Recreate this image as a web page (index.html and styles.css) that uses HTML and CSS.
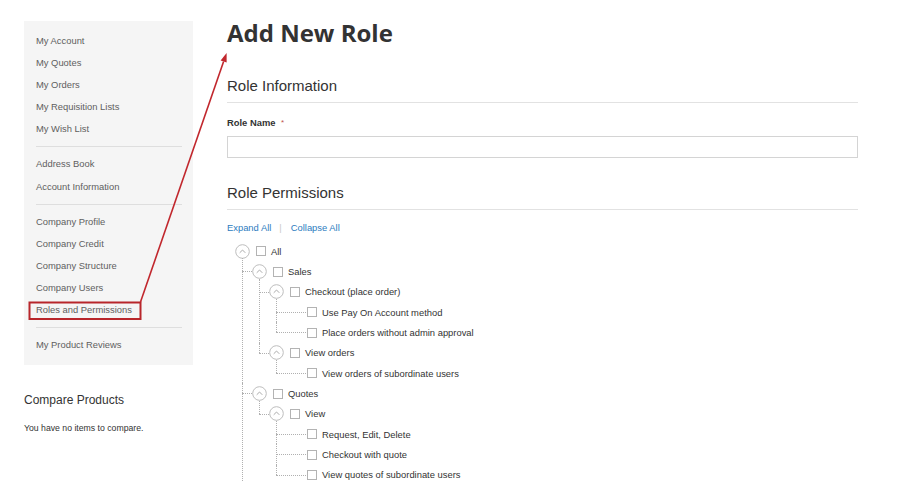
FILE: index.html
```html
<!DOCTYPE html>
<html>
<head>
<meta charset="utf-8">
<title>Add New Role</title>
<link rel="stylesheet" href="styles.css">
</head>
<body>
<div class="page">
  <aside class="sidebar">
    <nav class="account-nav">
      <ul class="nav-group">
        <li>My Account</li>
        <li>My Quotes</li>
        <li>My Orders</li>
        <li>My Requisition Lists</li>
        <li>My Wish List</li>
      </ul>
      <ul class="nav-group">
        <li>Address Book</li>
        <li>Account Information</li>
      </ul>
      <ul class="nav-group">
        <li>Company Profile</li>
        <li>Company Credit</li>
        <li>Company Structure</li>
        <li>Company Users</li>
        <li>Roles and Permissions</li>
      </ul>
      <ul class="nav-group">
        <li>My Product Reviews</li>
      </ul>
    </nav>
    <div class="compare">
      <div class="compare-title">Compare Products</div>
      <div class="compare-empty">You have no items to compare.</div>
    </div>
  </aside>

  <main class="main">
    <h1 class="page-title">Add New Role</h1>

    <h2 class="section-title first">Role Information</h2>
    <label class="field-label">Role Name <span class="req">*</span></label>
    <div class="input"></div>

    <h2 class="section-title">Role Permissions</h2>
    <div class="tree-links"><span class="link">Expand All</span><span class="sep">|</span><span class="link">Collapse All</span></div>

    <ul class="tree">
      <li>
        <div class="row"><span class="tog"><svg viewBox="0 0 15 15" width="15" height="15"><circle cx="7.5" cy="7.5" r="6.8" fill="#fff" stroke="#bdbdbd" stroke-width="1"/><path d="M4.7 8.8 L7.5 6 L10.3 8.8" fill="none" stroke="#ababab" stroke-width="1"/></svg></span><span class="cb"></span><span class="label">All</span></div>
        <ul>
          <li>
            <div class="row"><span class="tog"><svg viewBox="0 0 15 15" width="15" height="15"><circle cx="7.5" cy="7.5" r="6.8" fill="#fff" stroke="#bdbdbd" stroke-width="1"/><path d="M4.7 8.8 L7.5 6 L10.3 8.8" fill="none" stroke="#ababab" stroke-width="1"/></svg></span><span class="cb"></span><span class="label">Sales</span></div>
            <ul>
              <li>
                <div class="row"><span class="tog"><svg viewBox="0 0 15 15" width="15" height="15"><circle cx="7.5" cy="7.5" r="6.8" fill="#fff" stroke="#bdbdbd" stroke-width="1"/><path d="M4.7 8.8 L7.5 6 L10.3 8.8" fill="none" stroke="#ababab" stroke-width="1"/></svg></span><span class="cb"></span><span class="label">Checkout (place order)</span></div>
                <ul>
                  <li class="leaf"><div class="row"><span class="tog"></span><span class="cb"></span><span class="label">Use Pay On Account method</span></div></li>
                  <li class="leaf"><div class="row"><span class="tog"></span><span class="cb"></span><span class="label">Place orders without admin approval</span></div></li>
                </ul>
              </li>
              <li>
                <div class="row"><span class="tog"><svg viewBox="0 0 15 15" width="15" height="15"><circle cx="7.5" cy="7.5" r="6.8" fill="#fff" stroke="#bdbdbd" stroke-width="1"/><path d="M4.7 8.8 L7.5 6 L10.3 8.8" fill="none" stroke="#ababab" stroke-width="1"/></svg></span><span class="cb"></span><span class="label">View orders</span></div>
                <ul>
                  <li class="leaf"><div class="row"><span class="tog"></span><span class="cb"></span><span class="label">View orders of subordinate users</span></div></li>
                </ul>
              </li>
            </ul>
          </li>
          <li>
            <div class="row"><span class="tog"><svg viewBox="0 0 15 15" width="15" height="15"><circle cx="7.5" cy="7.5" r="6.8" fill="#fff" stroke="#bdbdbd" stroke-width="1"/><path d="M4.7 8.8 L7.5 6 L10.3 8.8" fill="none" stroke="#ababab" stroke-width="1"/></svg></span><span class="cb"></span><span class="label">Quotes</span></div>
            <ul>
              <li>
                <div class="row"><span class="tog"><svg viewBox="0 0 15 15" width="15" height="15"><circle cx="7.5" cy="7.5" r="6.8" fill="#fff" stroke="#bdbdbd" stroke-width="1"/><path d="M4.7 8.8 L7.5 6 L10.3 8.8" fill="none" stroke="#ababab" stroke-width="1"/></svg></span><span class="cb"></span><span class="label">View</span></div>
                <ul>
                  <li class="leaf"><div class="row"><span class="tog"></span><span class="cb"></span><span class="label">Request, Edit, Delete</span></div></li>
                  <li class="leaf"><div class="row"><span class="tog"></span><span class="cb"></span><span class="label">Checkout with quote</span></div></li>
                  <li class="leaf"><div class="row"><span class="tog"></span><span class="cb"></span><span class="label">View quotes of subordinate users</span></div></li>
                </ul>
              </li>
            </ul>
          </li>
          <li>
            <div class="row"><span class="tog"><svg viewBox="0 0 15 15" width="15" height="15"><circle cx="7.5" cy="7.5" r="6.8" fill="#fff" stroke="#bdbdbd" stroke-width="1"/><path d="M4.7 8.8 L7.5 6 L10.3 8.8" fill="none" stroke="#ababab" stroke-width="1"/></svg></span><span class="cb"></span><span class="label">Company Profile</span></div>
          </li>
        </ul>
      </li>
    </ul>
  </main>

  <svg class="annotation" width="897" height="482" viewBox="0 0 897 482">
    <rect x="29.5" y="302.5" width="111" height="16.5" fill="none" stroke="#b8262b" stroke-width="2"/>
    <line x1="140.5" y1="302" x2="223.6" y2="61.5" stroke="#c1272d" stroke-width="1.6"/>
    <polygon points="226.6,53 226.6,62.6 220.6,60.4" fill="#c1272d"/>
  </svg>
</div>
</body>
</html>
```

FILE: styles.css
```css
html, body {
  margin: 0;
  padding: 0;
  background: #fff;
  height: 100%;
  overflow: hidden;
}

body {
  font-family: "Liberation Sans", Arial, sans-serif;
  color: #333;
}

.page {
  position: relative;
  display: flex;
  gap: 34px;
  padding: 21px 0 0 24px;
  width: 897px;
  height: 482px;
  box-sizing: border-box;
}

.sidebar {
  width: 169px;
  flex-shrink: 0;
}

.account-nav {
  background: #f5f5f5;
  padding: 9px 11px 9px 12px;
}

.nav-group {
  list-style: none;
  margin: 0;
  padding: 0;
}

.nav-group + .nav-group {
  border-top: 1px solid #dedede;
  margin-top: 6px;
  padding-top: 6px;
}

.nav-group li {
  font-size: 9.4px;
  line-height: 22.1px;
  height: 22.1px;
  color: #606060;
  white-space: nowrap;
}

.compare {
  margin-top: 27px;
}

.compare-title {
  font-size: 12px;
  line-height: 16px;
  color: #333;
}

.compare-empty {
  margin-top: 14px;
  font-size: 8.7px;
  line-height: 12px;
  color: #333;
}

.main {
  width: 631px;
  flex-shrink: 0;
}

.page-title {
  margin: -3px 0 0 0;
  font-family: "Open Sans", sans-serif;
  font-weight: 700;
  font-size: 24px;
  line-height: 30px;
  color: #333;
}

.section-title {
  margin: 26px 0 0 0;
  font-weight: 400;
  font-size: 15px;
  line-height: 18px;
  color: #333;
  padding-bottom: 7px;
  border-bottom: 1px solid #e2e2e2;
}

.section-title.first {
  margin-top: 29px;
}

.field-label {
  display: block;
  margin-top: 14px;
  font-size: 9.4px;
  font-weight: 700;
  line-height: 12px;
  color: #333;
}

.req {
  color: #c0504d;
  font-weight: 400;
  font-size: 8px;
  margin-left: 3px;
  vertical-align: 1px;
}

.input {
  margin-top: 7px;
  height: 22px;
  box-sizing: border-box;
  border: 1px solid #d4d4d4;
  background: #fff;
}

.tree-links {
  margin-top: 12px;
  font-size: 9.4px;
  line-height: 12px;
}

.link {
  color: #2d7cc0;
}

.sep {
  color: #c8c8c8;
  margin: 0 9px 0 8px;
}

.tree, .tree ul {
  list-style: none;
  margin: 0;
  padding: 0;
}

.tree {
  margin-top: 7px;
  padding-left: 9px;
}

.tree ul {
  padding-left: 17px;
}

.tree li {
  position: relative;
}

.tree ul > li::before {
  content: "";
  position: absolute;
  left: -11px;
  top: 0;
  bottom: 0;
  border-left: 1px dotted #b0b0b0;
}

.tree ul > li:first-child::before {
  top: -3px;
}

.tree ul > li:last-child::before {
  bottom: auto;
  height: 10px;
}

.tree ul > li:first-child:last-child::before {
  height: 13px;
}

.tree ul > li::after {
  content: "";
  position: absolute;
  left: -11px;
  top: 10px;
  width: 10px;
  border-top: 1px dotted #b0b0b0;
}

.tree ul > li.leaf::after {
  width: 30px;
}

.row {
  display: flex;
  align-items: center;
  height: 20.35px;
}

.tog {
  width: 13px;
  height: 13px;
  margin-right: 7px;
  flex-shrink: 0;
  display: block;
  position: relative;
}

.tog svg {
  display: block;
  margin: -1px 0 0 -1px;
}

.cb {
  width: 10px;
  height: 10px;
  box-sizing: border-box;
  border: 1px solid #b3b3b3;
  background: #fff;
  margin-right: 5px;
  flex-shrink: 0;
}

.label {
  font-size: 9.4px;
  color: #333;
  white-space: nowrap;
}

.annotation {
  position: absolute;
  left: 0;
  top: 0;
  pointer-events: none;
}
```
